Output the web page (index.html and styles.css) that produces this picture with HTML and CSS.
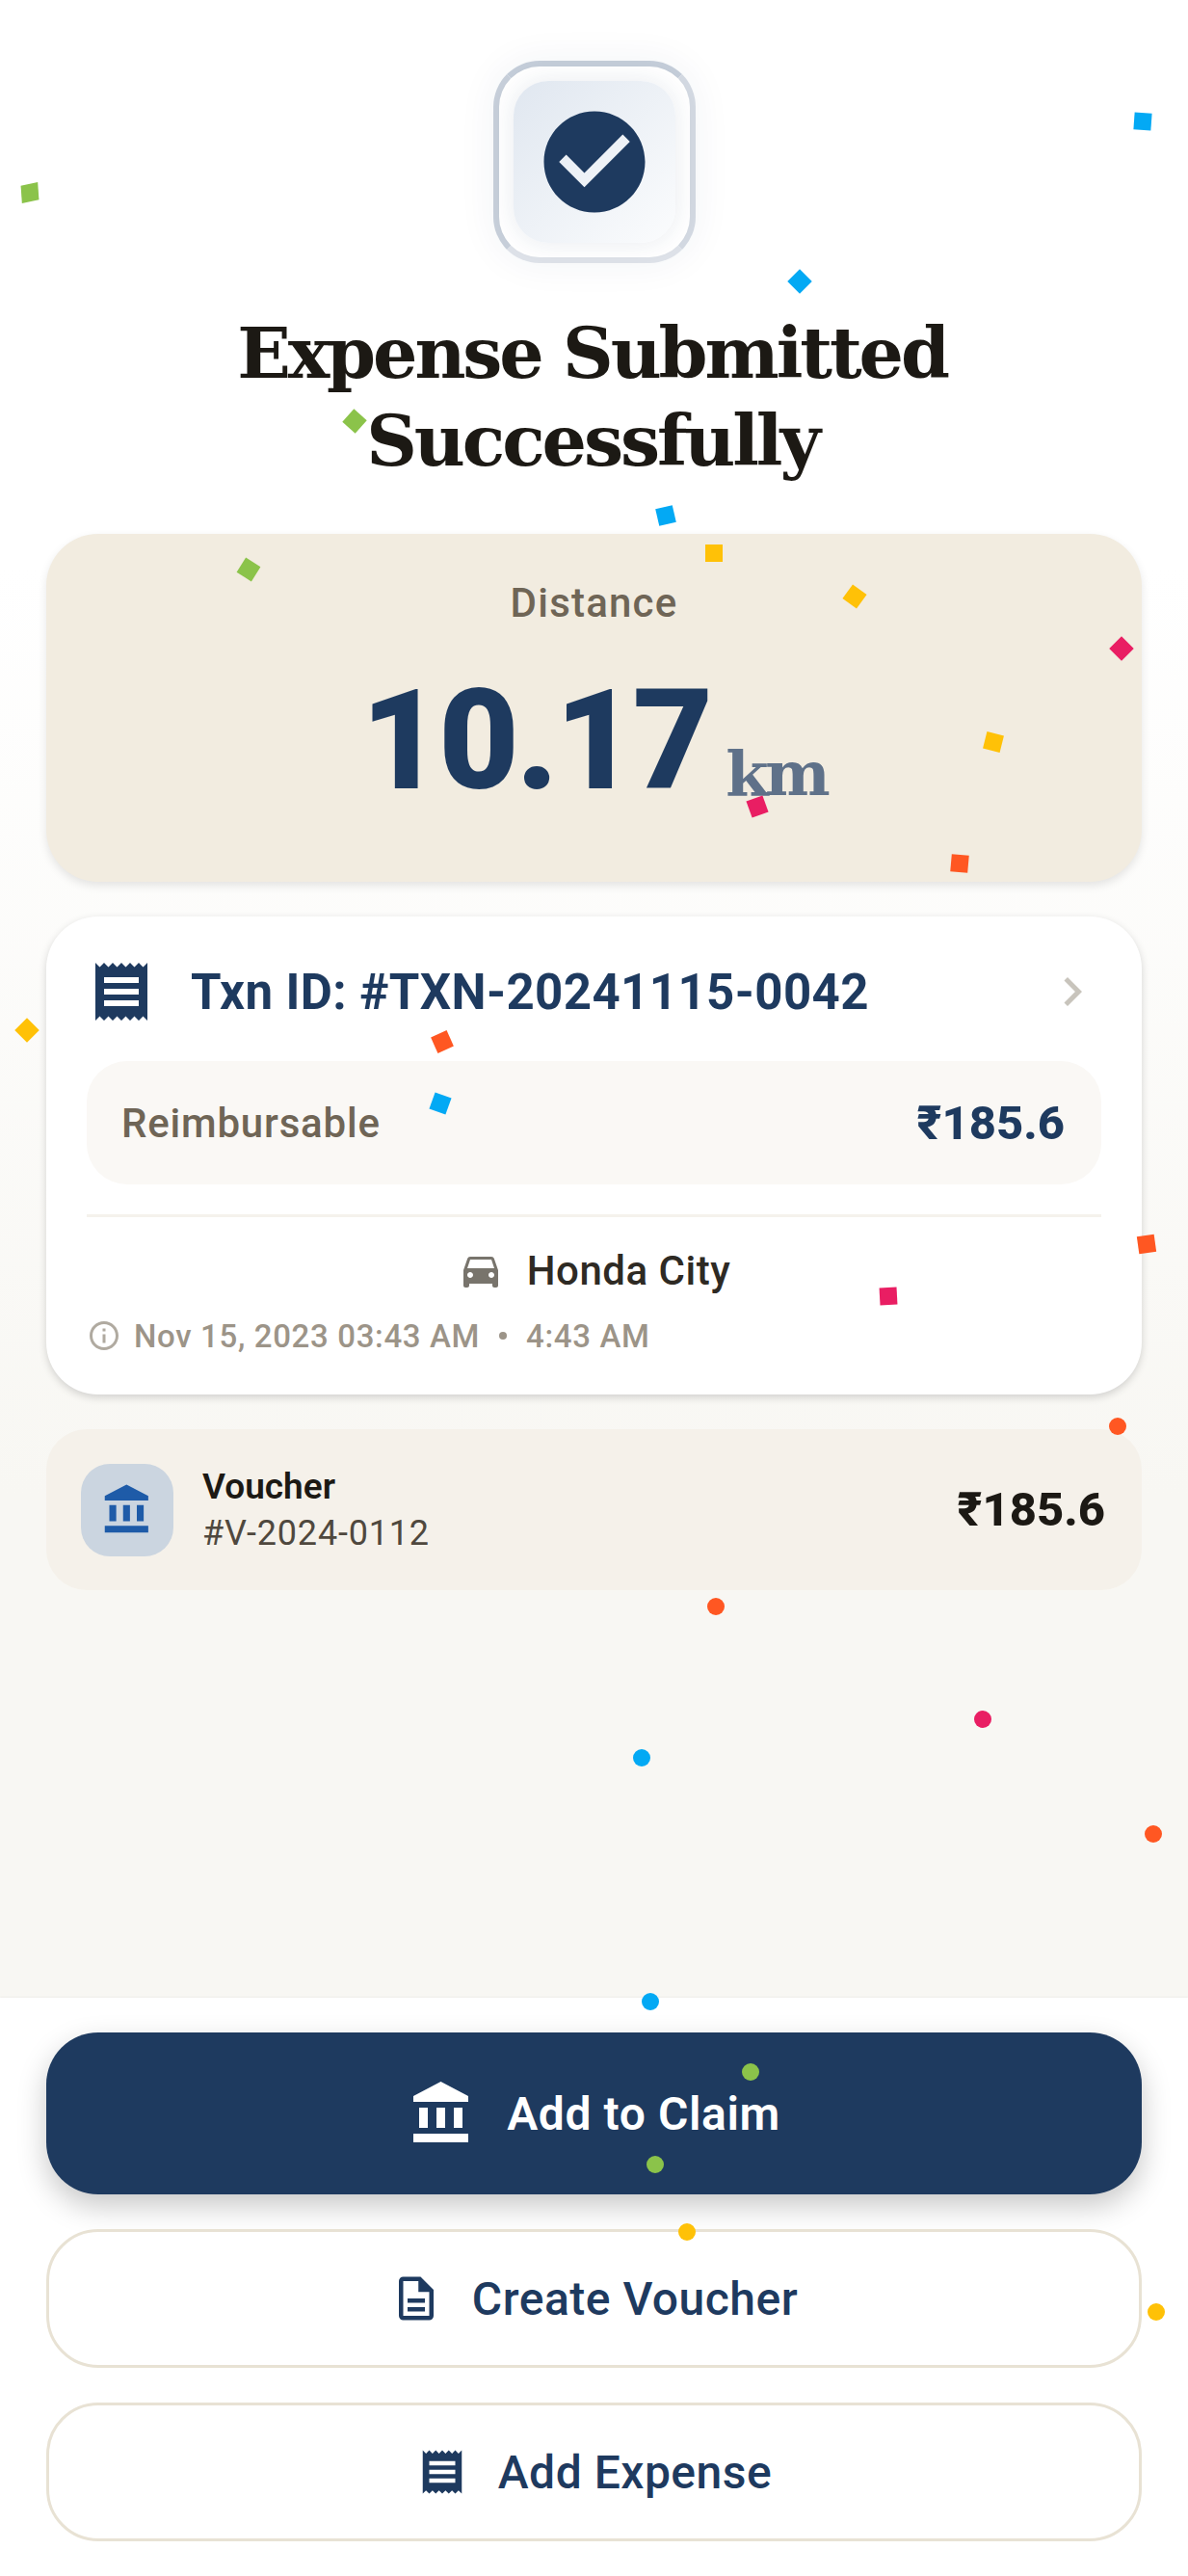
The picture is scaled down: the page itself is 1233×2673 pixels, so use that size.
FILE: index.html
```html
<!DOCTYPE html>
<html lang="en">
<head>
    <meta charset="UTF-8">
    <meta name="viewport" content="width=device-width, initial-scale=1.0">
    <title>Expense Submitted</title>
    <link rel="stylesheet" href="styles.css">
</head>
<body>
<div class="screen">

    <main class="content">
        <!-- Success badge -->
        <div class="badge">
            <div class="badge-inner">
                <svg class="badge-icon" viewBox="0 0 24 24"><path d="M12 2C6.48 2 2 6.48 2 12s4.48 10 10 10 10-4.48 10-10S17.52 2 12 2zm-2 15l-5-5 1.41-1.41L10 14.17l7.59-7.59L19 8l-9 9z"/></svg>
            </div>
        </div>

        <h1 class="title">Expense Submitted Successfully</h1>

        <!-- Distance -->
        <section class="distance">
            <div class="distance-label">Distance</div>
            <div class="distance-value">
                <span class="distance-num">10.17</span>
                <span class="distance-unit">km</span>
            </div>
        </section>

        <!-- Transaction -->
        <section class="txn">
            <div class="txn-head">
                <svg class="txn-icon" viewBox="0 0 24 24"><path d="M18 17H6v-2h12v2zm0-4H6v-2h12v2zm0-4H6V7h12v2zM3 22l1.5-1.5L6 22l1.5-1.5L9 22l1.5-1.5L12 22l1.5-1.5L15 22l1.5-1.5L18 22l1.5-1.5L21 22V2l-1.5 1.5L18 2l-1.5 1.5L15 2l-1.5 1.5L12 2l-1.5 1.5L9 2 7.5 3.5 6 2 4.5 3.5 3 2v20z"/></svg>
                <span class="txn-id">Txn ID: #TXN-20241115-0042</span>
                <svg class="txn-chevron" viewBox="0 0 24 24"><path d="M10 6L8.59 7.41 13.17 12l-4.58 4.59L10 18l6-6z"/></svg>
            </div>
            <div class="txn-pill">
                <span class="txn-pill-label">Reimbursable</span>
                <span class="txn-pill-value">₹185.6</span>
            </div>
            <div class="txn-divider"></div>
            <div class="txn-vehicle">
                <svg class="txn-car" viewBox="0 0 24 24"><path d="M18.92 6.01C18.72 5.42 18.16 5 17.5 5h-11c-.66 0-1.21.42-1.42 1.01L3 12v8c0 .55.45 1 1 1h1c.55 0 1-.45 1-1v-1h12v1c0 .55.45 1 1 1h1c.55 0 1-.45 1-1v-8l-2.08-5.99zM6.5 16c-.83 0-1.5-.67-1.5-1.5S5.67 13 6.5 13s1.5.67 1.5 1.5S7.33 16 6.5 16zm11 0c-.83 0-1.5-.67-1.5-1.5s.67-1.5 1.5-1.5 1.5.67 1.5 1.5-.67 1.5-1.5 1.5zM5 11l1.5-4.5h11L19 11H5z"/></svg>
                <span>Honda City</span>
            </div>
            <div class="txn-date">
                <svg class="txn-info" viewBox="0 0 24 24"><path d="M11 7h2v2h-2zm0 4h2v6h-2zm1-9C6.48 2 2 6.48 2 12s4.48 10 10 10 10-4.48 10-10S17.52 2 12 2zm0 18c-4.41 0-8-3.59-8-8s3.59-8 8-8 8 3.59 8 8-3.59 8-8 8z"/></svg>
                <span>Nov 15, 2023 03:43 AM</span>
                <span class="txn-dot"></span>
                <span>4:43 AM</span>
            </div>
        </section>

        <!-- Voucher -->
        <section class="voucher">
            <div class="voucher-tile">
                <svg class="voucher-icon" viewBox="0 0 24 24"><path d="M4 10v7h3v-7H4zm6 0v7h3v-7h-3zM2 22h19v-3H2v3zm14-12v7h3v-7h-3zm-4.5-9L2 6v2h19V6l-9.5-5z"/></svg>
            </div>
            <div class="voucher-text">
                <div class="voucher-name">Voucher</div>
                <div class="voucher-code">#V-2024-0112</div>
            </div>
            <div class="voucher-amount">₹185.6</div>
        </section>
    </main>

    <footer class="actions">
        <button class="btn btn-primary">
            <svg class="btn-icon-lg" viewBox="0 0 24 24"><path d="M4 10v7h3v-7H4zm6 0v7h3v-7h-3zM2 22h19v-3H2v3zm14-12v7h3v-7h-3zm-4.5-9L2 6v2h19V6l-9.5-5z"/></svg>
            Add to Claim
        </button>
        <button class="btn btn-outline">
            <svg class="btn-icon" viewBox="0 0 24 24"><path d="M8 16h8v2H8zm0-4h8v2H8zm6-10H6c-1.1 0-2 .9-2 2v16c0 1.1.89 2 1.99 2H18c1.1 0 2-.9 2-2V8l-6-6zm4 18H6V4h7v5h5v11z"/></svg>
            Create Voucher
        </button>
        <button class="btn btn-outline">
            <svg class="btn-icon" viewBox="0 0 24 24"><path d="M18 17H6v-2h12v2zm0-4H6v-2h12v2zm0-4H6V7h12v2zM3 22l1.5-1.5L6 22l1.5-1.5L9 22l1.5-1.5L12 22l1.5-1.5L15 22l1.5-1.5L18 22l1.5-1.5L21 22V2l-1.5 1.5L18 2l-1.5 1.5L15 2l-1.5 1.5L12 2l-1.5 1.5L9 2 7.5 3.5 6 2 4.5 3.5 3 2v20z"/></svg>
            Add Expense
        </button>
    </footer>

    <!-- Confetti over everything -->
    <div class="confetti">
        <i class="bit blue s1"></i><i class="bit green s2"></i><i class="bit blue s3"></i>
        <i class="bit green s4"></i><i class="bit blue s5"></i><i class="bit amber s6"></i>
        <i class="bit green s7"></i><i class="bit amber s8"></i><i class="bit pink s9"></i>
        <i class="bit amber s10"></i><i class="bit pink s11"></i><i class="bit orange s12"></i>
        <i class="bit amber s13"></i><i class="bit orange s14"></i><i class="bit blue s15"></i>
        <i class="bit orange s16"></i><i class="bit pink s17"></i>
        <i class="dot orange d1"></i><i class="dot orange d2"></i><i class="dot pink d3"></i>
        <i class="dot blue d4"></i><i class="dot orange d5"></i><i class="dot blue d6"></i>
        <i class="dot green d7"></i><i class="dot green d8"></i><i class="dot amber d9"></i>
        <i class="dot amber d10"></i>
    </div>
</div>
</body>
</html>
```

FILE: styles.css
```css
body {
    margin: 0;
    font-family: Roboto, "Noto Sans", sans-serif;
    color: #1c1914;
}
.screen {
    position: relative;
    height: 2673px;
    overflow: hidden;
    display: flex;
    flex-direction: column;
    background: linear-gradient(180deg, #fff 0%, #fff 22%, #f8f7f3 58%);
}
.content {
    flex: 1;
    padding: 63px 48px 0;
}

/* badge */
.badge {
    box-sizing: border-box;
    width: 210px;
    height: 210px;
    margin: 0 auto;
    padding: 15px;
    border: 6px solid;
    border-color: #c3ccd8 #d2d8e1 #dde1e8 #c6ced9;
    border-radius: 48px;
    background: #fff;
    box-shadow: 0 0 40px rgba(30, 58, 95, 0.06);
}
.badge-inner {
    width: 168px;
    height: 168px;
    display: flex;
    align-items: center;
    justify-content: center;
    border-radius: 36px;
    background: linear-gradient(135deg, #e0e7f0, #fbfcfd);
    box-shadow: 0 0 24px rgba(30, 58, 95, 0.1);
}
.badge-icon {
    width: 126px;
    height: 126px;
    fill: #1e3a5f;
}
.title {
    box-sizing: border-box;
    width: 800px;
    margin: 48px auto 0;
    padding-right: 4px;
    font-family: "DejaVu Serif", serif;
    font-size: 73px;
    line-height: 91px;
    font-weight: 700;
    letter-spacing: -3.1px;
    text-align: center;
    color: #1c1914;
}

/* distance card */
.distance {
    box-sizing: border-box;
    height: 361px;
    margin-top: 51px;
    padding-top: 47px;
    border-radius: 54px;
    background: #f2ece0;
    box-shadow: 0 4px 10px rgba(0, 0, 0, 0.1);
    text-align: center;
}
.distance-label {
    font-size: 42px;
    line-height: 50px;
    font-weight: 500;
    letter-spacing: 1.2px;
    color: #6f6556;
}
.distance-value {
    display: flex;
    justify-content: center;
    align-items: flex-end;
    gap: 16px;
    margin-top: 33px;
}
.distance-num {
    font-size: 144px;
    line-height: 170px;
    font-weight: 900;
    letter-spacing: -3px;
    color: #1e3a5f;
}
.distance-unit {
    margin-bottom: 16px;
    font-family: "DejaVu Serif", serif;
    font-size: 64px;
    line-height: 70px;
    font-weight: 700;
    letter-spacing: -3.5px;
    color: #5f7189;
}

/* transaction card */
.txn {
    box-sizing: border-box;
    height: 496px;
    margin-top: 36px;
    padding: 42px 42px 0;
    border-radius: 54px;
    background: #fff;
    box-shadow: 0 3px 8px rgba(0, 0, 0, 0.16);
}
.txn-head {
    display: flex;
    align-items: center;
    height: 72px;
}
.txn-icon {
    width: 72px;
    height: 72px;
    fill: #1e3a5f;
}
.txn-id {
    flex: 1;
    margin-left: 36px;
    font-size: 51px;
    font-weight: 700;
    letter-spacing: 0.4px;
    color: #1e3a5f;
}
.txn-chevron {
    width: 60px;
    height: 60px;
    fill: #c8c4bc;
}
.txn-pill {
    display: flex;
    align-items: center;
    justify-content: space-between;
    height: 128px;
    margin-top: 36px;
    padding: 0 38px 0 36px;
    border-radius: 42px;
    background: #faf8f5;
}
.txn-pill-label {
    font-size: 42px;
    font-weight: 500;
    letter-spacing: 0.8px;
    color: #6f6556;
}
.txn-pill-value {
    font-size: 49px;
    font-weight: 800;
    color: #1e3a5f;
}
.txn-divider {
    height: 3px;
    margin-top: 31px;
    background: #f5f2ec;
}
.txn-vehicle {
    display: flex;
    align-items: center;
    justify-content: center;
    gap: 24px;
    height: 60px;
    margin-top: 25px;
    font-size: 42px;
    font-weight: 500;
    letter-spacing: 0.5px;
    color: #2e2a24;
}
.txn-car {
    width: 48px;
    height: 48px;
    fill: #78746c;
}
.txn-date {
    display: flex;
    align-items: center;
    height: 36px;
    margin-top: 20px;
    font-size: 33px;
    font-weight: 500;
    letter-spacing: 0.65px;
    color: #9c9488;
}
.txn-info {
    width: 36px;
    height: 36px;
    margin-right: 13px;
    fill: #b0aaa0;
}
.txn-dot {
    width: 8px;
    height: 8px;
    margin: 0 20px;
    border-radius: 50%;
    background: #9c9488;
}

/* voucher row */
.voucher {
    box-sizing: border-box;
    display: flex;
    align-items: center;
    height: 167px;
    margin-top: 36px;
    padding: 0 38px 0 36px;
    border-radius: 42px;
    background: #f5f1ea;
}
.voucher-tile {
    display: flex;
    align-items: center;
    justify-content: center;
    width: 96px;
    height: 96px;
    border-radius: 30px;
    background: #cbd5e0;
}
.voucher-icon {
    width: 57px;
    height: 57px;
    fill: #1e5ba8;
}
.voucher-text {
    flex: 1;
    margin-left: 30px;
}
.voucher-name {
    font-size: 37px;
    line-height: 46px;
    font-weight: 600;
    color: #1c1914;
}
.voucher-code {
    margin-top: 2px;
    font-size: 36px;
    line-height: 46px;
    letter-spacing: 0.8px;
    color: #4f483e;
}
.voucher-amount {
    font-size: 49px;
    font-weight: 800;
    color: #1c1914;
}

/* bottom actions */
.actions {
    box-sizing: border-box;
    display: flex;
    flex-direction: column;
    gap: 36px;
    height: 600px;
    padding: 36px 48px 0;
    background: #fff;
    box-shadow: 0 -1px 2px rgba(0, 0, 0, 0.04);
}
.btn {
    display: flex;
    align-items: center;
    justify-content: center;
    box-sizing: border-box;
    width: 100%;
    font-family: inherit;
    font-size: 48px;
    color: #1e3a5f;
}
.btn-primary {
    height: 168px;
    gap: 31px;
    border: 0;
    border-radius: 54px;
    background: #1e3a5f;
    box-shadow: 0 12px 30px rgba(0, 0, 0, 0.22);
    font-weight: 600;
    letter-spacing: 0.6px;
    color: #fff;
}
.btn-outline {
    height: 144px;
    gap: 31px;
    border: 3px solid #e8e2d4;
    border-radius: 54px;
    background: #fff;
    font-weight: 500;
    letter-spacing: 0.5px;
}
.btn-icon-lg {
    width: 72px;
    height: 72px;
    fill: #fff;
}
.btn-icon {
    width: 54px;
    height: 54px;
    fill: #1e3a5f;
}

/* confetti */
.confetti {
    position: absolute;
    inset: 0;
    pointer-events: none;
}
.bit, .dot {
    position: absolute;
    width: 18px;
    height: 18px;
    margin: -9px 0 0 -9px;
}
.dot { border-radius: 50%; }
.blue { background: #03a9f4; }
.green { background: #8bc34a; }
.amber { background: #ffc107; }
.pink { background: #e91e63; }
.orange { background: #ff5722; }

.s1 { left: 1186px; top: 126px; transform: rotate(4deg); }
.s2 { left: 31px; top: 200px; transform: rotate(-12deg) skewX(-8deg); }
.s3 { left: 830px; top: 292px; transform: rotate(45deg); }
.s4 { left: 368px; top: 437px; transform: rotate(42deg); }
.s5 { left: 691px; top: 535px; transform: rotate(-13deg); }
.s6 { left: 741px; top: 574px; }
.s7 { left: 258px; top: 591px; transform: rotate(32deg); }
.s8 { left: 887px; top: 619px; transform: rotate(36deg); }
.s9 { left: 1164px; top: 673px; transform: rotate(45deg); }
.s10 { left: 1031px; top: 770px; transform: rotate(14deg); }
.s11 { left: 786px; top: 837px; transform: rotate(-20deg); }
.s12 { left: 996px; top: 896px; transform: rotate(5deg); }
.s13 { left: 28px; top: 1069px; transform: rotate(45deg); }
.s14 { left: 459px; top: 1081px; transform: rotate(-24deg); }
.s15 { left: 457px; top: 1145px; transform: rotate(20deg); }
.s16 { left: 1190px; top: 1291px; transform: rotate(-8deg); }
.s17 { left: 922px; top: 1345px; transform: rotate(-3deg); }

.d1 { left: 1160px; top: 1480px; }
.d2 { left: 743px; top: 1667px; }
.d3 { left: 1020px; top: 1784px; }
.d4 { left: 666px; top: 1824px; }
.d5 { left: 1197px; top: 1903px; }
.d6 { left: 675px; top: 2077px; }
.d7 { left: 779px; top: 2150px; }
.d8 { left: 680px; top: 2246px; }
.d9 { left: 713px; top: 2316px; }
.d10 { left: 1200px; top: 2399px; }
```
